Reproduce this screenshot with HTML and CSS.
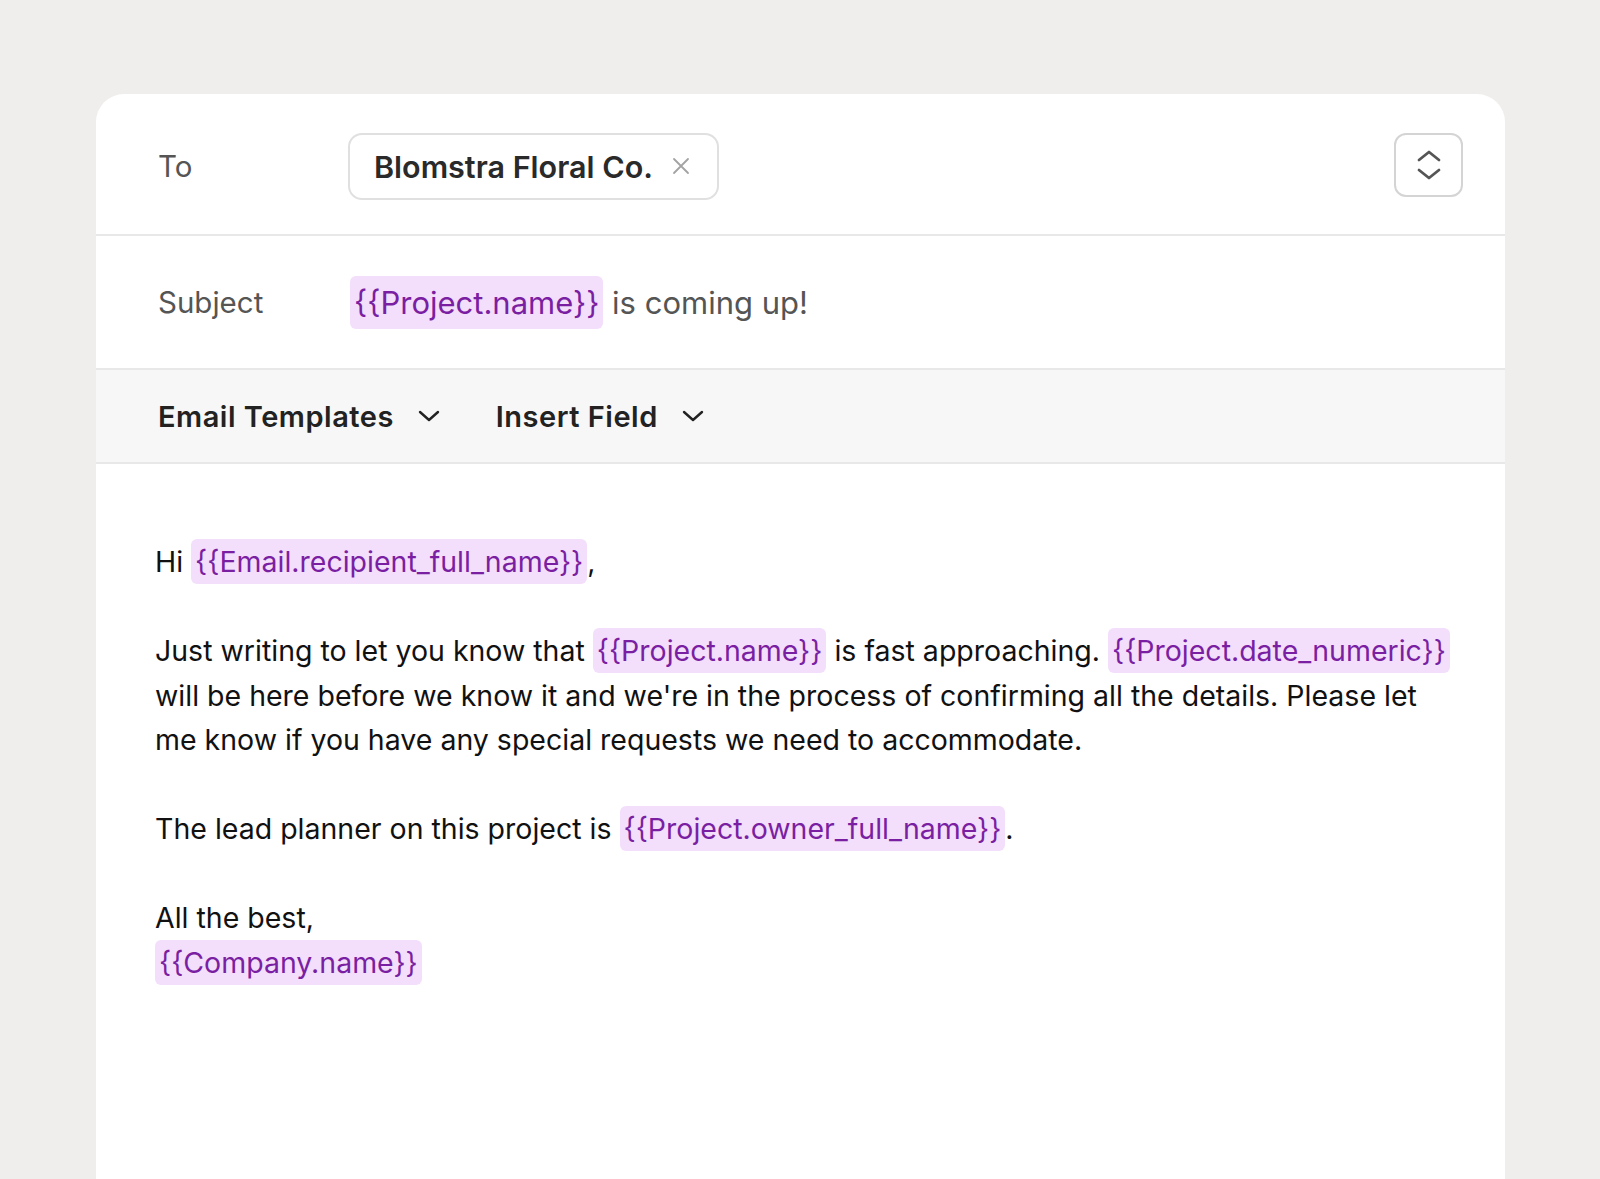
FILE: index.html
```html
<!DOCTYPE html>
<html lang="en">
<head>
    <meta charset="UTF-8">
    <meta name="viewport" content="width=device-width, initial-scale=1.0">
    <title>Email Composer</title>
    <link rel="stylesheet" href="styles.css">
</head>
<body>

<div class="composer">
    <div class="row row-to">
        <span class="label">To</span>
        <div class="recipient">
            <span class="recipient-name">Blomstra Floral Co.</span>
            <svg class="remove" width="20" height="20" viewBox="0 0 20 20">
                <path d="M3 3 L17 17 M17 3 L3 17" stroke="#a3a3a3" stroke-width="1.8" fill="none" stroke-linecap="round"/>
            </svg>
        </div>
        <button class="stepper" type="button">
            <svg width="26" height="32" viewBox="0 0 26 32">
                <path d="M3 11 L13 3 L23 11" stroke="#555" stroke-width="2.8" fill="none" stroke-linecap="round" stroke-linejoin="round"/>
                <path d="M3 21 L13 29 L23 21" stroke="#555" stroke-width="2.8" fill="none" stroke-linecap="round" stroke-linejoin="round"/>
            </svg>
        </button>
    </div>

    <div class="row row-subject">
        <span class="label">Subject</span>
        <div class="subject-text"><span class="field">{{Project.name}}</span> is coming up!</div>
    </div>

    <div class="toolbar">
        <div class="dropdown">
            Email Templates
            <svg width="22" height="12" viewBox="0 0 22 12">
                <path d="M2 2 L11 10 L20 2" stroke="#222" stroke-width="2.4" fill="none" stroke-linecap="round" stroke-linejoin="round"/>
            </svg>
        </div>
        <div class="dropdown">
            Insert Field
            <svg width="22" height="12" viewBox="0 0 22 12">
                <path d="M2 2 L11 10 L20 2" stroke="#222" stroke-width="2.4" fill="none" stroke-linecap="round" stroke-linejoin="round"/>
            </svg>
        </div>
    </div>

    <div class="message">
        <p>Hi <span class="field">{{Email.recipient_full_name}}</span>,</p>
        <p>Just writing to let you know that <span class="field">{{Project.name}}</span> is fast approaching. <span class="field">{{Project.date_numeric}}</span> will be here before we know it and we're in the process of confirming all the details. Please let me know if you have any special requests we need to accommodate.</p>
        <p>The lead planner on this project is <span class="field">{{Project.owner_full_name}}</span>.</p>
        <p>All the best,<br><span class="field">{{Company.name}}</span></p>
    </div>
</div>

</body>
</html>
```

FILE: styles.css
```css
body {
    font-family: Inter, "Noto Sans", sans-serif;
    background-color: #efeeec;
    margin: 0;
    padding: 94px 0 0 96px;
    height: 1179px;
    box-sizing: border-box;
    overflow: hidden;
}

.composer {
    width: 1409px;
    min-height: 1085px;
    background-color: #fff;
    border-radius: 28px 28px 0 0;
}

.row {
    display: flex;
    align-items: center;
    border-bottom: 2px solid #e8e8e8;
    padding: 0 42px 0 62px;
}

.row-to {
    height: 136px;
    padding-top: 4px;
}

.row-subject {
    height: 132px;
}

.label {
    width: 190px;
    flex-shrink: 0;
    font-size: 29.5px;
    color: #555;
}

.recipient {
    display: flex;
    align-items: center;
    gap: 18px;
    height: 63px;
    padding: 0 26px 0 24px;
    border: 2px solid #e0e0e0;
    border-radius: 14px;
}

.recipient-name {
    font-size: 30.5px;
    font-weight: 600;
    color: #2a2a2a;
}

.stepper {
    margin-left: auto;
    margin-top: -2px;
    width: 69px;
    height: 64px;
    background: #fff;
    border: 2px solid #d4d4d4;
    border-radius: 12px;
    display: flex;
    align-items: center;
    justify-content: center;
    padding: 0;
}

.subject-text {
    font-size: 31px;
    color: #555;
    margin-left: 2px;
}

.subject-text .field {
    padding: 8px 4px;
}

.toolbar {
    display: flex;
    align-items: center;
    gap: 56px;
    height: 92px;
    padding: 0 0 0 62px;
    background-color: #f7f7f7;
    border-bottom: 2px solid #e8e8e8;
}

.dropdown {
    display: flex;
    align-items: center;
    gap: 24px;
    font-size: 29px;
    font-weight: 600;
    color: #222;
    letter-spacing: 0.5px;
}

.message {
    padding: 76px 50px 0 59px;
    font-size: 28.5px;
    line-height: 44.5px;
    color: #111;
}

.message p {
    margin: 0 0 44.5px;
}

.field {
    background-color: #f3defc;
    color: #7b1fa2;
    border-radius: 6px;
    padding: 5px 4px;
}
```
